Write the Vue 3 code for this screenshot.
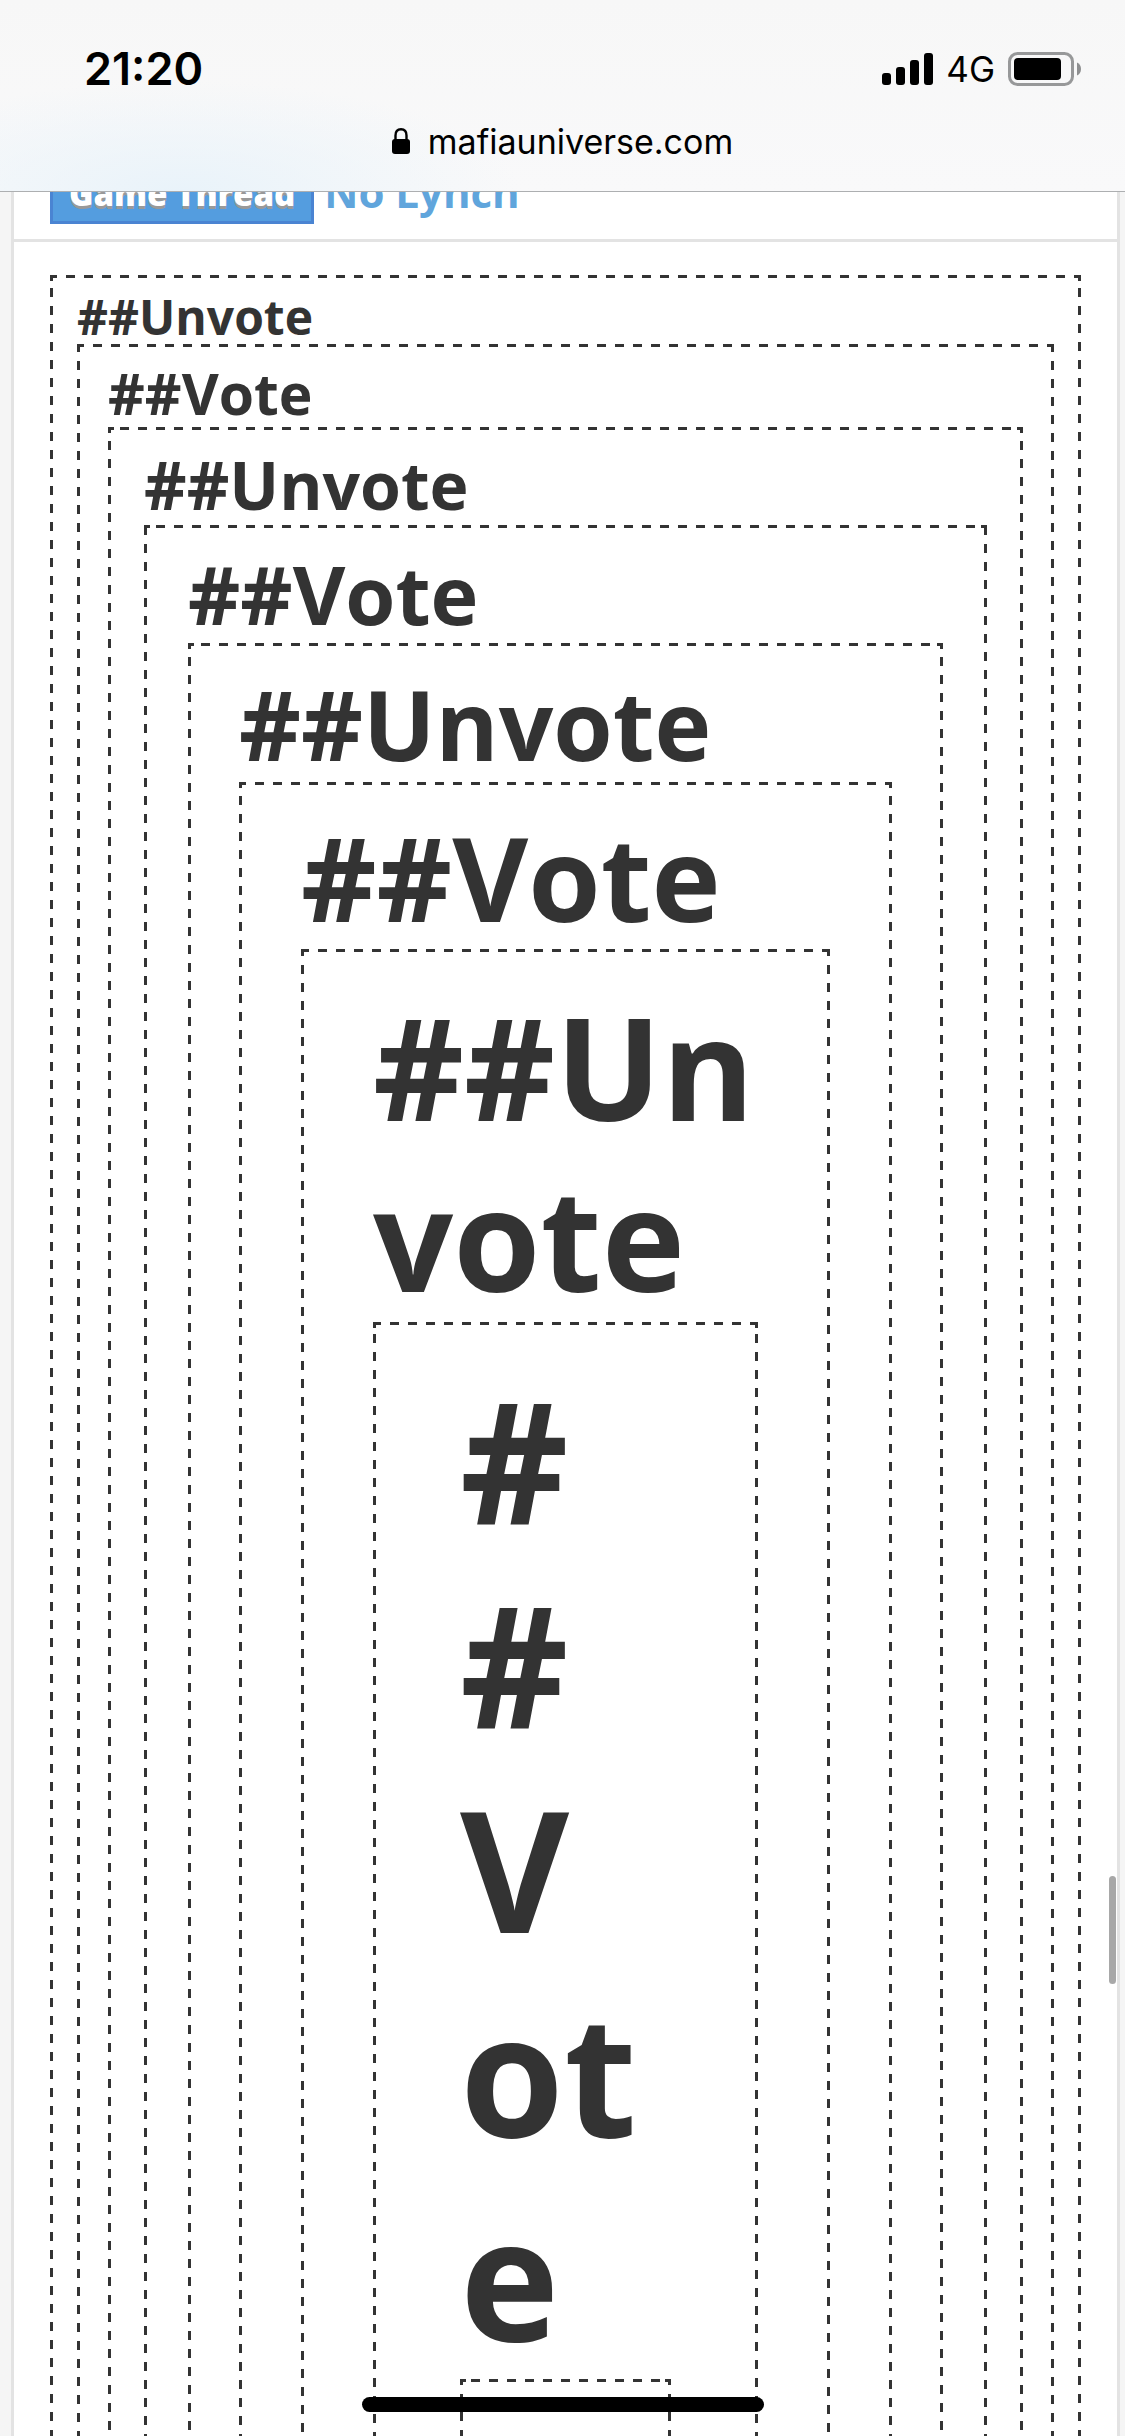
<script setup>
</script>

<template>
  <div class="screen">
    <header class="chrome">
      <div class="status">
        <time class="clock">21:20</time>
        <div class="indicators">
          <svg class="signal" viewBox="0 0 51 32" aria-hidden="true">
            <rect x="0" y="20" width="9" height="12" rx="3" />
            <rect x="14" y="14" width="9" height="18" rx="3" />
            <rect x="28" y="7" width="9" height="25" rx="3" />
            <rect x="42" y="0" width="9" height="32" rx="3" />
          </svg>
          <span class="network">4G</span>
          <svg class="battery" viewBox="0 0 73 34" aria-hidden="true">
            <rect x="1.5" y="1.5" width="63" height="31" rx="8" fill="none" stroke="#979899" stroke-width="3" />
            <rect x="6" y="6" width="47" height="22" rx="4" />
            <path d="M69 10.500C71.500 11.500 73 14 73 17S71.500 22.500 69 23.500Z" fill="#8e8f90" />
          </svg>
        </div>
      </div>
      <div class="address">
        <svg class="lock" viewBox="0 0 18 26" aria-hidden="true">
          <rect x="0" y="11" width="18" height="15" rx="3" />
          <path d="M3.500 12V7.500C3.500 3.500 5.500 1.200 9 1.200S14.500 3.500 14.500 7.500V12" fill="none" stroke="#000" stroke-width="2.400" />
        </svg>
        <span>mafiauniverse.com</span>
      </div>
    </header>

    <main class="page">
      <div class="title-row">
        <a class="tag" href="#thread">Game Thread</a>
        <a class="title" href="#lynch">No Lynch</a>
      </div>
      <div class="post">
        <div class="box l0">##Unvote
          <div class="box l1">##Vote
            <div class="box l2">##Unvote
              <div class="box l3">##Vote
                <div class="box l4">##Unvote
                  <div class="box l5">##Vote
                    <div class="box l6">##Unvote
                      <div class="box l7">##Vote
                        <div class="box l8"></div>
                      </div>
                    </div>
                  </div>
                </div>
              </div>
            </div>
          </div>
        </div>
      </div>
    </main>

    <div class="scroll-thumb"></div>
    <div class="home-bar"></div>
  </div>
</template>

<style>
body {
  margin: 0;
  background: #f5f5f5;
}
</style>

<style scoped>
.screen {
  position: relative;
  height: 100vh;
  overflow: hidden;
  display: flex;
  flex-direction: column;
  background: #f5f5f5;
}

.chrome {
  flex: none;
  box-sizing: border-box;
  height: 192px;
  border-bottom: 1px solid #adafb1;
  background:
    radial-gradient(ellipse 340px 110px at 180px 100%, #e9f3fa, #e9f3fa00),
    linear-gradient(to bottom, #f7f7f7, #f9f9fa);
  color: #000;
  font-family: Inter, "Liberation Sans", sans-serif;
}

.status {
  display: flex;
  justify-content: space-between;
  align-items: center;
  height: 64px;
  padding: 37px 44px 0 84px;
}

.clock {
  font-size: 45px;
  font-weight: 600;
  line-height: 64px;
}

.indicators {
  display: flex;
  align-items: center;
  gap: 13px;
}

.signal {
  width: 51px;
  height: 32px;
}

.network {
  font-size: 35px;
  line-height: 64px;
}

.battery {
  width: 73px;
  height: 34px;
}

.address {
  display: flex;
  justify-content: center;
  align-items: center;
  gap: 18px;
  height: 80px;
  font-size: 34px;
}

.lock {
  width: 18px;
  height: 26px;
}

.page {
  flex: none;
  margin: 0 5px 0 11px;
  border: solid #e3e3e3;
  border-width: 0 3px;
  background: #fff;
  color: #333;
  font-family: "Open Sans", "Noto Sans", sans-serif;
}

/* Scrolled halfway under the browser bar */
.title-row {
  display: flex;
  align-items: flex-end;
  gap: 10px;
  height: 32px;
  padding: 0 36px 15px;
  overflow: hidden;
  border-bottom: 3px solid #e3e3e3;
}

.tag {
  padding: 5px 16px 3px;
  border: 3px solid #4a84d2;
  background: #549ddf;
  color: #fff;
  font-size: 33px;
  font-weight: 800;
  line-height: 48px;
  text-decoration: none;
  text-shadow: 0 3px 0 #999;
  white-space: nowrap;
}

.title {
  color: #60a5dc;
  font-size: 42px;
  font-weight: 700;
  line-height: 64px;
  text-decoration: none;
  white-space: nowrap;
}

.post {
  padding: 33px 36px 0;
}

/* Long dashes, 9px on and 9px off, with a solid corner */
.box {
  --ink: #333;
  --solid: linear-gradient(var(--ink), var(--ink));
  --row: linear-gradient(to right, var(--ink) 9px, transparent 9px);
  --column: linear-gradient(to bottom, var(--ink) 9px, transparent 9px);
  border: 0 solid transparent;
  border-width: 3px 3px 0;
  background-origin: border-box;
  background-image: var(--solid), var(--solid), var(--solid), var(--solid), var(--row), var(--column), var(--column);
  background-size: 6px 3px, 3px 6px, 6px 3px, 3px 6px, 18px 3px, 3px 18px, 3px 18px;
  background-position: left top, left top, right top, right top, var(--x) 0, left var(--y), right var(--y);
  background-repeat: no-repeat, no-repeat, no-repeat, no-repeat, repeat-x, repeat-y, repeat-y;
  font-weight: 700;
  overflow-wrap: anywhere;
}

.l0 { --x: 16px; --y: 13px; padding: 12px 24px 0; font-size: 48px; line-height: 54px; }
.l1 { --x: 16px; --y: 17px; padding: 12px 28px 0; font-size: 57px; line-height: 68px; }
.l2 { --x: 12px; --y: 14px; padding: 13px 33px 0; font-size: 66px; line-height: 82px; }
.l3 { --x: 12px; --y: 1px; padding: 16px 41px 0; font-size: 81px; line-height: 99px; }
.l4 { --x: 13px; --y: 14px; padding: 19px 48px 0; font-size: 96px; line-height: 117px; }
.l5 { --x: 16px; --y: 14px; padding: 21px 59px 0; font-size: 117px; line-height: 141px; }
.l6 { --x: 17px; --y: 16px; margin-top: 2px; padding: 29px 69px 0; font-size: 141px; line-height: 171px; }
.l7 { --x: 17px; --y: 12px; margin-top: -1px; padding: 33px 84px 0; font-size: 168px; line-height: 204px; }
.l8 { --x: 11px; --y: 15px; margin-top: 1px; min-height: 240px; }

.scroll-thumb {
  position: absolute;
  top: 77%;
  right: 9px;
  width: 7px;
  height: 108px;
  border-radius: 4px;
  background: #a8a8a8;
}

.home-bar {
  position: absolute;
  bottom: 24px;
  left: 50%;
  width: 402px;
  height: 15px;
  border-radius: 8px;
  background: #000;
  transform: translateX(-50%);
}
</style>
